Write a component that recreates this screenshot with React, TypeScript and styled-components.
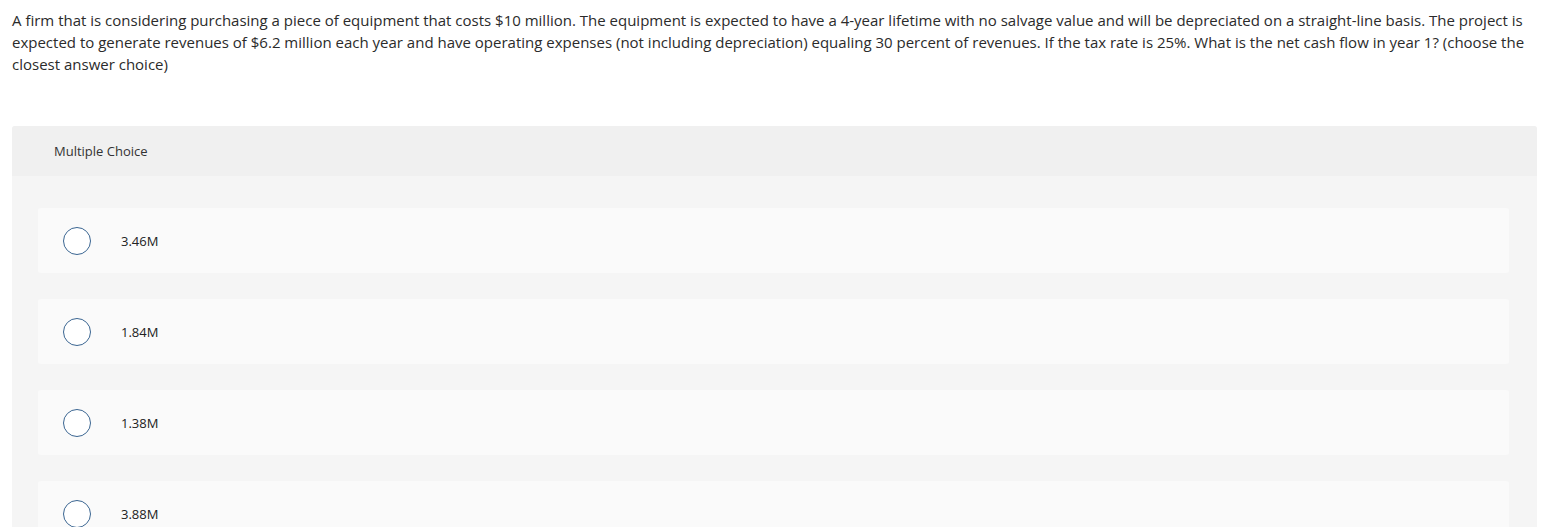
import React from "react";
import styled, { createGlobalStyle } from "styled-components";

const Global = createGlobalStyle`
  html, body { margin: 0; padding: 0; background: #ffffff; }
  body { font-family: "Open Sans", "Liberation Sans", sans-serif; color: #333333; }
`;

const Page = styled.div`
  padding: 9px 28px 0 12px;
`;

const Question = styled.p`
  margin: 0;
  font-size: 15px;
  line-height: 22px;
  color: #2b2b2b;
`;

const Panel = styled.section`
  margin-top: 51px;
  border-radius: 3px 3px 0 0;
  background: #f5f5f5;
  overflow: hidden;
`;

const Header = styled.div`
  height: 50px;
  display: flex;
  align-items: center;
  padding-left: 42px;
  background: #f0f0f0;
  font-size: 13px;
  color: #333333;
`;

const Options = styled.div`
  display: flex;
  flex-direction: column;
  gap: 26px;
  padding: 32px 28px 0 26px;
`;

const Card = styled.label`
  display: flex;
  align-items: center;
  height: 65px;
  padding-left: 25px;
  background: #fafafa;
  border-radius: 3px;
  cursor: pointer;
`;

const Radio = styled.span`
  width: 28px;
  height: 28px;
  box-sizing: border-box;
  border: 1.5px solid #3a6591;
  border-radius: 50%;
  background: #ffffff;
  flex-shrink: 0;
`;

const Answer = styled.span`
  margin-left: 30px;
  font-size: 13px;
  color: #222222;
`;

const answers = ["3.46M", "1.84M", "1.38M", "3.88M"];

export default function App() {
  return (
    <Page>
      <Global />
      <Question>
        A firm that is considering purchasing a piece of equipment that costs $10 million. The equipment is expected to have a
        4-year lifetime with no salvage value and will be depreciated on a straight-line basis. The project is expected to generate
        revenues of $6.2 million each year and have operating expenses (not including depreciation) equaling 30 percent of revenues.
        If the tax rate is 25%. What is the net cash flow in year 1? (choose the closest answer choice)
      </Question>
      <Panel>
        <Header>Multiple Choice</Header>
        <Options>
          {answers.map((a) => (
            <Card key={a}>
              <Radio />
              <Answer>{a}</Answer>
            </Card>
          ))}
        </Options>
      </Panel>
    </Page>
  );
}
